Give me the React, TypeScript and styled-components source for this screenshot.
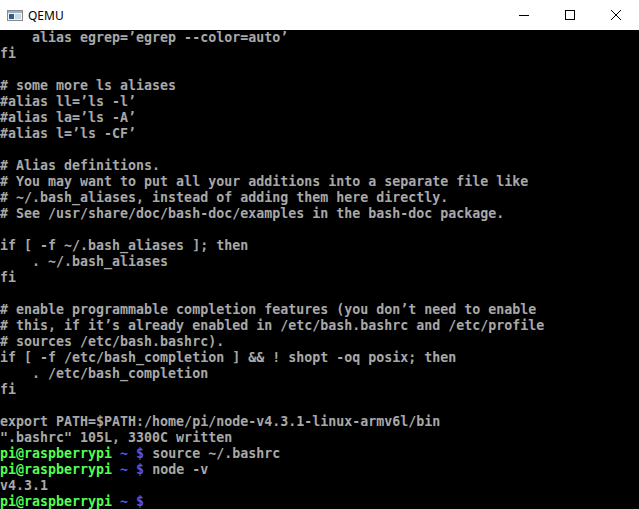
import React from 'react';
import styled, { createGlobalStyle } from 'styled-components';

const GlobalStyle = createGlobalStyle`
  html, body {
    margin: 0;
    padding: 0;
    background: #000000;
  }
`;

type Tone = 'text' | 'user' | 'prompt';

const toneColor: Record<Tone, string> = {
  text: '#a8a8a8',
  user: '#54fc54',
  prompt: '#5454fc',
};

const Window = styled.div`
  width: 639px;
  height: 509px;
  display: flex;
  flex-direction: column;
  overflow: hidden;
  background: #000000;
`;

const TitleBar = styled.div`
  height: 30px;
  flex: none;
  display: flex;
  align-items: center;
  background: #ffffff;
`;

const TitleIcon = styled.svg`
  width: 16px;
  height: 16px;
  margin-left: 7px;
  margin-right: 5px;
  flex: none;
`;

const TitleText = styled.span`
  flex: 1;
  font-family: 'Noto Sans', 'Open Sans', sans-serif;
  font-size: 12px;
  color: #000000;
`;

const ControlButton = styled.div`
  width: 46px;
  height: 30px;
  display: flex;
  align-items: center;
  justify-content: center;
`;

const Terminal = styled.div`
  flex: 1;
  background: #000000;
  font-family: 'DejaVu Sans Mono', 'Liberation Mono', monospace;
  font-size: 13.3px;
  font-weight: bold;
  line-height: 16px;
  overflow: hidden;
`;

const Line = styled.div`
  height: 16px;
  white-space: pre;
  color: ${toneColor.text};
`;

const Seg = styled.span<{ $tone: Tone }>`
  color: ${p => toneColor[p.$tone]};
`;

const plain = (s: string): [Tone, string][] => [['text', s]];
const prompt = (cmd: string): [Tone, string][] => [
  ['user', 'pi@raspberrypi '],
  ['prompt', '~ $'],
  ['text', cmd],
];

const lines: [Tone, string][][] = [
  plain('    alias egrep=’egrep --color=auto’'),
  plain('fi'),
  plain(''),
  plain('# some more ls aliases'),
  plain('#alias ll=’ls -l’'),
  plain('#alias la=’ls -A’'),
  plain('#alias l=’ls -CF’'),
  plain(''),
  plain('# Alias definitions.'),
  plain('# You may want to put all your additions into a separate file like'),
  plain('# ~/.bash_aliases, instead of adding them here directly.'),
  plain('# See /usr/share/doc/bash-doc/examples in the bash-doc package.'),
  plain(''),
  plain('if [ -f ~/.bash_aliases ]; then'),
  plain('    . ~/.bash_aliases'),
  plain('fi'),
  plain(''),
  plain('# enable programmable completion features (you don’t need to enable'),
  plain('# this, if it’s already enabled in /etc/bash.bashrc and /etc/profile'),
  plain('# sources /etc/bash.bashrc).'),
  plain('if [ -f /etc/bash_completion ] && ! shopt -oq posix; then'),
  plain('    . /etc/bash_completion'),
  plain('fi'),
  plain(''),
  plain('export PATH=$PATH:/home/pi/node-v4.3.1-linux-armv6l/bin'),
  plain('".bashrc" 105L, 3300C written'),
  prompt(' source ~/.bashrc'),
  prompt(' node -v'),
  plain('v4.3.1'),
  prompt(' '),
];

const App: React.FC = () => (
  <Window>
    <GlobalStyle />
    <TitleBar>
      <TitleIcon viewBox="0 0 16 16">
        <rect x="0.5" y="3.5" width="15" height="10" fill="#f4f4f4" stroke="#8a8a8a" />
        <rect x="1" y="4" width="14" height="2" fill="#9ab0c8" />
        <rect x="2" y="7" width="5" height="5" fill="#2f5f8f" />
        <rect x="8" y="7" width="6" height="5" fill="#c8d8e4" />
      </TitleIcon>
      <TitleText>QEMU</TitleText>
      <ControlButton>
        <svg width="10" height="10" viewBox="0 0 10 10">
          <line x1="0" y1="5.5" x2="10" y2="5.5" stroke="#000" strokeWidth="1" />
        </svg>
      </ControlButton>
      <ControlButton>
        <svg width="10" height="10" viewBox="0 0 10 10">
          <rect x="0.5" y="0.5" width="9" height="9" fill="none" stroke="#000" strokeWidth="1" />
        </svg>
      </ControlButton>
      <ControlButton>
        <svg width="10" height="10" viewBox="0 0 10 10">
          <path d="M0 0 L10 10 M10 0 L0 10" stroke="#000" strokeWidth="1" />
        </svg>
      </ControlButton>
    </TitleBar>
    <Terminal>
      {lines.map((segs, i) => (
        <Line key={i}>
          {segs.map(([tone, text], j) => (
            <Seg key={j} $tone={tone}>{text}</Seg>
          ))}
        </Line>
      ))}
    </Terminal>
  </Window>
);

export default App;
